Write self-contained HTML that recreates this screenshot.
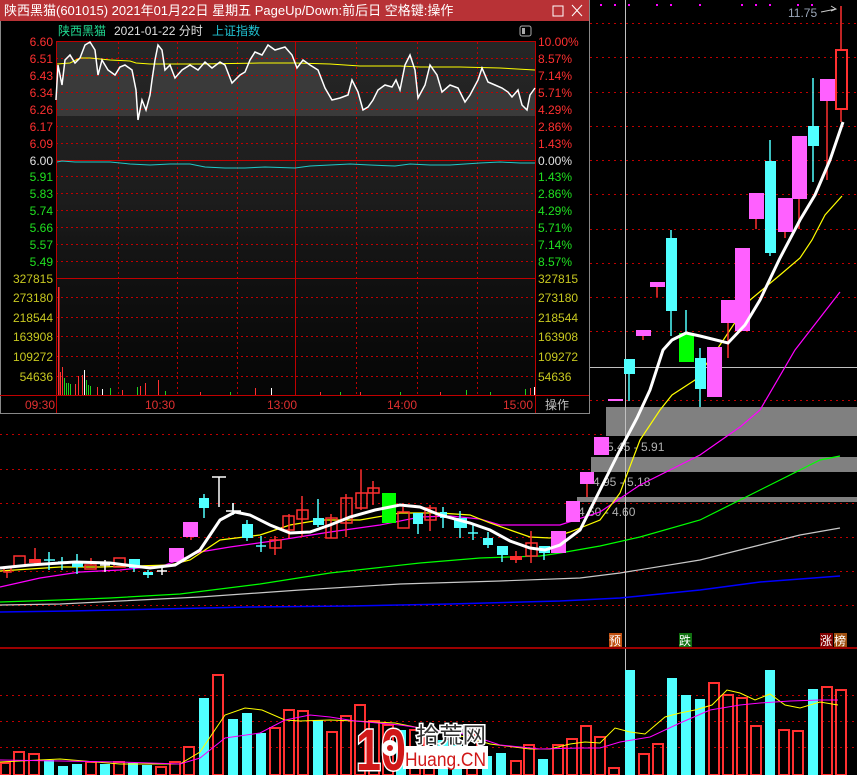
<!DOCTYPE html><html><head><meta charset="utf-8"><style>
html,body{margin:0;padding:0;background:#000;width:857px;height:775px;overflow:hidden}
svg{display:block}
text{font-family:"Liberation Sans","Noto Sans CJK SC",sans-serif}
</style></head><body>
<svg width="857" height="775" viewBox="0 0 857 775" xmlns="http://www.w3.org/2000/svg">
<rect width="857" height="775" fill="#000"/>
<g stroke="#c00000" stroke-width="1" stroke-dasharray="2,4">
<line x1="590" y1="23.5" x2="857" y2="23.5"/><line x1="590" y1="57.5" x2="857" y2="57.5"/><line x1="590" y1="92.5" x2="857" y2="92.5"/><line x1="590" y1="126.5" x2="857" y2="126.5"/><line x1="590" y1="160.5" x2="857" y2="160.5"/><line x1="590" y1="194.5" x2="857" y2="194.5"/><line x1="590" y1="229.5" x2="857" y2="229.5"/><line x1="590" y1="263.5" x2="857" y2="263.5"/><line x1="590" y1="297.5" x2="857" y2="297.5"/><line x1="590" y1="331.5" x2="857" y2="331.5"/><line x1="590" y1="400.5" x2="857" y2="400.5"/>
<line x1="0" y1="434.5" x2="857" y2="434.5"/><line x1="0" y1="469.5" x2="857" y2="469.5"/><line x1="0" y1="503.5" x2="857" y2="503.5"/><line x1="0" y1="537.5" x2="857" y2="537.5"/><line x1="0" y1="571.5" x2="857" y2="571.5"/><line x1="0" y1="605.5" x2="857" y2="605.5"/>
<line x1="0" y1="695.5" x2="857" y2="695.5"/><line x1="0" y1="721.5" x2="857" y2="721.5"/><line x1="0" y1="747.5" x2="857" y2="747.5"/>
</g>
<g fill="#ff00ff"><rect x="600" y="4" width="2" height="2"/><rect x="614" y="4" width="2" height="2"/><rect x="628" y="4" width="2" height="2"/><rect x="656" y="4" width="2" height="2"/><rect x="670" y="4" width="2" height="2"/><rect x="699" y="4" width="2" height="2"/><rect x="741" y="4" width="2" height="2"/><rect x="755" y="4" width="2" height="2"/><rect x="769" y="4" width="2" height="2"/><rect x="797" y="4" width="2" height="2"/><rect x="811" y="4" width="2" height="2"/></g>
<text x="788" y="17" font-size="12" fill="#9aa6b8">11.75</text>
<path d="M821 12 L836 9 M831 6 L836 9 L831 11" stroke="#ccc" fill="none" stroke-width="1"/>
<rect x="606" y="407" width="251" height="29" fill="#808080"/>
<rect x="591" y="457" width="266" height="15" fill="#808080"/>
<rect x="577" y="497" width="280" height="5" fill="#808080"/>
<g font-size="12" fill="#b0b0b0"><text x="607" y="451">5.45 - 5.91</text><text x="593" y="486">4.95 - 5.18</text><text x="578" y="516">4.50 - 4.60</text></g>
<line x1="625.5" y1="0" x2="625.5" y2="647" stroke="#c0c0c0"/>
<line x1="590" y1="367.5" x2="857" y2="367.5" stroke="#c0c0c0"/>
<line x1="625.5" y1="648" x2="625.5" y2="775" stroke="#c0c0c0"/>
<g fill="none">
<polyline stroke="#0000ff" stroke-width="1.5" points="0,612 70,611 160,609 250,607 350,606 450,604 560,601 620,598 700,590 760,582 840,576"/>
<polyline stroke="#c8c8c8" stroke-width="1.2" points="0,605 60,604 120,601 200,597 300,590 400,584 500,581 580,578 620,573 700,560 760,545 800,535 840,528"/>
<polyline stroke="#00ff00" stroke-width="1.2" points="0,602 60,600 110,598 180,594 260,584 330,573 420,563 480,558 540,556 560,553 600,546 640,537 700,520 740,500 780,480 820,460 840,456"/>
<polyline stroke="#ff00ff" stroke-width="1.2" points="0,587 40,578 80,572 120,570 165,565 200,552 230,547 280,540 330,532 380,525 420,517 450,516 480,519 500,525 520,525 560,525 600,512 640,485 700,455 740,427 760,410 795,350 840,292"/>
<polyline stroke="#ffff00" stroke-width="1.2" points="0,571 60,567 100,567 170,565 190,560 220,540 260,535 290,525 320,520 360,520 400,513 440,513 470,515 490,523 510,530 530,537 550,538 570,532 600,520 620,493 640,440 660,410 672,395 695,380 720,345 750,300 780,275 800,258 812,240 825,215 842,196"/>
</g>
<g stroke-width="1.5">
<g stroke="#ff3030" fill="none">
<rect x="4" y="567" width="7" height="5"/><line x1="7" y1="572" x2="7" y2="578"/>
<rect x="14" y="556" width="11" height="10"/>
<rect x="85" y="565" width="11" height="4"/><line x1="91" y1="558" x2="91" y2="565"/>
<rect x="114" y="558" width="11" height="9"/>
<rect x="270" y="540" width="11" height="8"/><line x1="275" y1="536" x2="275" y2="555"/>
<rect x="283" y="516" width="11" height="14"/><line x1="289" y1="514" x2="289" y2="538"/>
<rect x="297" y="510" width="11" height="9"/><line x1="302" y1="496" x2="302" y2="537"/>
<rect x="326" y="518" width="11" height="20"/><line x1="331" y1="514" x2="331" y2="538"/>
<rect x="341" y="498" width="11" height="25"/><line x1="346" y1="494" x2="346" y2="537"/>
<rect x="356" y="493" width="11" height="15"/><line x1="361" y1="470" x2="361" y2="510"/>
<rect x="368" y="488" width="11" height="5"/><line x1="373" y1="481" x2="373" y2="505"/>
<rect x="398" y="512" width="11" height="16"/><line x1="403" y1="507" x2="403" y2="512"/>
<rect x="425" y="508" width="11" height="12"/><line x1="430" y1="505" x2="430" y2="531"/>
<rect x="526" y="543" width="11" height="13"/><line x1="531" y1="531" x2="531" y2="563"/>
</g>
<g stroke="#ff3030"><line x1="35" y1="548" x2="35" y2="565"/><line x1="516" y1="551" x2="516" y2="563"/></g>
<rect x="29" y="559" width="12" height="4" fill="#ff3030"/><rect x="510" y="556" width="12" height="4" fill="#ff3030"/>
<g stroke="#50ffff">
<line x1="49" y1="552" x2="49" y2="570"/><line x1="44" y1="560" x2="55" y2="560"/>
<line x1="62" y1="557" x2="62" y2="570"/><line x1="58" y1="562" x2="66" y2="562"/>
<line x1="77" y1="554" x2="77" y2="574"/>
<line x1="134" y1="559" x2="134" y2="572"/><line x1="148" y1="570" x2="148" y2="578"/>
<line x1="204" y1="494" x2="204" y2="518"/><line x1="233" y1="503" x2="233" y2="515"/><line x1="247" y1="520" x2="247" y2="541"/>
<line x1="261" y1="536" x2="261" y2="552"/><line x1="256" y1="546" x2="266" y2="546"/>
<line x1="318" y1="499" x2="318" y2="527"/><line x1="418" y1="513" x2="418" y2="534"/>
<line x1="443" y1="507" x2="443" y2="528"/><line x1="460" y1="511" x2="460" y2="538"/>
<line x1="473" y1="525" x2="473" y2="540"/><line x1="468" y1="533" x2="478" y2="533"/>
<line x1="488" y1="532" x2="488" y2="548"/><line x1="502" y1="546" x2="502" y2="562"/><line x1="544" y1="546" x2="544" y2="560"/>
</g>
<g fill="#50ffff"><rect x="72" y="563" width="11" height="4"/><rect x="129" y="559" width="11" height="9"/><rect x="143" y="572" width="10" height="3"/><rect x="199" y="498" width="10" height="10"/><rect x="242" y="524" width="11" height="14"/><rect x="313" y="518" width="11" height="7"/><rect x="413" y="513" width="10" height="11"/><rect x="440" y="512" width="7" height="6"/><rect x="454" y="518" width="13" height="10"/><rect x="483" y="538" width="10" height="7"/><rect x="497" y="546" width="11" height="9"/><rect x="539" y="546" width="11" height="7"/></g>
<g stroke="#fff"><line x1="105" y1="560" x2="105" y2="572"/><line x1="100" y1="565" x2="110" y2="565"/><line x1="162" y1="568" x2="162" y2="575"/><line x1="157" y1="571" x2="167" y2="571"/><line x1="219" y1="477" x2="219" y2="507"/><line x1="212" y1="477" x2="226" y2="477"/><line x1="233" y1="503" x2="233" y2="511"/><line x1="226" y1="511" x2="241" y2="511"/></g>
<g stroke="#ff3030"><line x1="191" y1="537" x2="191" y2="540"/><line x1="587" y1="484" x2="587" y2="497"/></g>
<g fill="#ff60ff"><rect x="169" y="548" width="15" height="14"/><rect x="183" y="522" width="15" height="15"/><rect x="551" y="531" width="15" height="22"/><rect x="566" y="501" width="14" height="21"/><rect x="580" y="472" width="14" height="12"/><rect x="594" y="437" width="15" height="18"/></g>
<rect x="382" y="493" width="14" height="30" fill="#00ff00"/>
</g>
<g stroke-width="1.5">
<rect x="608" y="399" width="15" height="2" fill="#ff60ff"/>
<line x1="629" y1="359" x2="629" y2="401" stroke="#50ffff"/><rect x="624" y="359" width="11" height="15" fill="#50ffff"/>
<line x1="643" y1="330" x2="643" y2="340" stroke="#ff3030"/><rect x="636" y="330" width="15" height="6" fill="#ff60ff"/>
<line x1="657" y1="282" x2="657" y2="297" stroke="#ff3030"/><rect x="650" y="282" width="15" height="5" fill="#ff60ff"/>
<line x1="671" y1="230" x2="671" y2="336" stroke="#50ffff"/><rect x="666" y="238" width="11" height="73" fill="#50ffff"/>
<line x1="686" y1="310" x2="686" y2="333" stroke="#50ffff"/><rect x="679" y="333" width="15" height="29" fill="#00ff00"/>
<line x1="700" y1="348" x2="700" y2="407" stroke="#50ffff"/><rect x="695" y="358" width="11" height="31" fill="#50ffff"/>
<rect x="707" y="347" width="15" height="50" fill="#ff60ff"/>
<line x1="728" y1="300" x2="728" y2="358" stroke="#ff3030"/><rect x="721" y="300" width="16" height="23" fill="#ff60ff"/>
<rect x="735" y="248" width="15" height="83" fill="#ff60ff"/>
<line x1="756" y1="193" x2="756" y2="229" stroke="#ff3030"/><rect x="749" y="193" width="15" height="26" fill="#ff60ff"/>
<line x1="770" y1="140" x2="770" y2="256" stroke="#50ffff"/><rect x="765" y="161" width="11" height="92" fill="#50ffff"/>
<line x1="785" y1="198" x2="785" y2="238" stroke="#ff3030"/><rect x="778" y="198" width="15" height="34" fill="#ff60ff"/>
<line x1="799" y1="136" x2="799" y2="229" stroke="#ff3030"/><rect x="792" y="136" width="15" height="63" fill="#ff60ff"/>
<line x1="813" y1="78" x2="813" y2="182" stroke="#50ffff"/><rect x="808" y="126" width="11" height="20" fill="#50ffff"/>
<line x1="827" y1="79" x2="827" y2="180" stroke="#ff3030"/><rect x="820" y="79" width="15" height="22" fill="#ff60ff"/>
<line x1="841" y1="6" x2="841" y2="50" stroke="#ff3030"/><line x1="841" y1="109" x2="841" y2="122" stroke="#ff3030"/><rect x="836" y="50" width="11" height="59" fill="none" stroke="#ff3030" stroke-width="2"/>
</g>
<polyline fill="none" stroke="#fff" stroke-width="3" points="0,568 30,565 75,562 110,563 150,568 175,565 200,550 220,520 235,512 250,515 270,525 290,533 310,532 330,525 350,517 375,510 400,505 420,507 440,515 470,523 490,530 510,541 530,548 545,550 560,545 580,530 600,490 620,450 637,418 650,390 663,350 672,340 686,333 700,336 728,343 745,325 760,300 780,258 800,220 815,195 830,160 843,122"/>
<line x1="0" y1="648" x2="857" y2="648" stroke="#d00000" stroke-width="1.5"/>
<g font-size="12"><rect x="609" y="633" width="13" height="14" fill="#c05010"/><text x="609" y="645" fill="#fff">预</text>
<rect x="679" y="633" width="13" height="14" fill="#107010"/><text x="679" y="645" fill="#fff">跌</text>
<rect x="820" y="633" width="13" height="14" fill="#800000"/><text x="820" y="645" fill="#fff">涨</text>
<rect x="834" y="633" width="13" height="14" fill="#a05010"/><text x="834" y="645" fill="#fff">榜</text></g>
<g fill="none" stroke="#ff3030" stroke-width="2">
<rect x="1" y="763" width="9" height="12"/><rect x="14" y="752" width="10" height="23"/><rect x="29" y="754" width="10" height="21"/><rect x="86" y="762" width="10" height="13"/><rect x="114" y="762" width="10" height="13"/><rect x="156" y="767" width="10" height="8"/><rect x="170" y="762" width="10" height="13"/><rect x="184" y="747" width="10" height="28"/><rect x="213" y="675" width="10" height="100"/><rect x="270" y="728" width="10" height="47"/><rect x="284" y="710" width="10" height="65"/><rect x="298" y="711" width="10" height="64"/><rect x="327" y="732" width="10" height="43"/><rect x="341" y="716" width="10" height="59"/><rect x="355" y="705" width="10" height="70"/><rect x="369" y="721" width="10" height="54"/><rect x="383" y="725" width="10" height="50"/><rect x="410" y="730" width="10" height="45"/><rect x="424" y="735" width="10" height="40"/><rect x="467" y="735" width="10" height="40"/><rect x="511" y="761" width="10" height="14"/><rect x="524" y="745" width="10" height="30"/><rect x="553" y="745" width="10" height="30"/><rect x="567" y="739" width="10" height="36"/><rect x="581" y="726" width="10" height="49"/><rect x="595" y="737" width="10" height="38"/><rect x="609" y="768" width="10" height="7"/><rect x="639" y="754" width="10" height="21"/><rect x="653" y="744" width="10" height="31"/><rect x="709" y="683" width="10" height="92"/><rect x="723" y="695" width="10" height="80"/><rect x="737" y="698" width="10" height="77"/><rect x="751" y="726" width="10" height="49"/><rect x="779" y="730" width="10" height="45"/><rect x="793" y="731" width="10" height="44"/><rect x="822" y="687" width="10" height="88"/><rect x="836" y="690" width="10" height="85"/>
</g>
<g fill="#50ffff">
<rect x="44" y="760" width="10" height="15"/><rect x="58" y="766" width="10" height="9"/><rect x="72" y="764" width="10" height="11"/><rect x="100" y="764" width="10" height="11"/><rect x="128" y="763" width="10" height="12"/><rect x="142" y="765" width="10" height="10"/><rect x="199" y="698" width="10" height="77"/><rect x="228" y="719" width="10" height="56"/><rect x="242" y="713" width="10" height="62"/><rect x="256" y="733" width="10" height="42"/><rect x="313" y="720" width="10" height="55"/><rect x="396" y="730" width="10" height="45"/><rect x="438" y="740" width="10" height="35"/><rect x="452" y="745" width="10" height="30"/><rect x="482" y="756" width="10" height="19"/><rect x="496" y="753" width="10" height="22"/><rect x="538" y="759" width="10" height="16"/><rect x="625" y="670" width="10" height="105"/><rect x="667" y="678" width="10" height="97"/><rect x="681" y="695" width="10" height="80"/><rect x="695" y="699" width="10" height="76"/><rect x="765" y="670" width="10" height="105"/><rect x="808" y="689" width="10" height="86"/>
</g>
<polyline fill="none" stroke="#ffff00" stroke-width="1" points="0,762 60,759 120,764 180,764 200,752 225,715 245,708 262,710 285,720 300,721 330,720 355,721 395,723 430,730 470,738 490,744 530,749 550,749 570,744 585,742 600,743 615,728 630,732 645,734 665,717 680,713 695,710 712,705 727,690 740,693 755,700 770,694 785,705 800,708 820,702 838,705"/>
<polyline fill="none" stroke="#ff00ff" stroke-width="1" points="0,760 60,761 120,762 180,764 200,758 225,738 260,733 285,720 310,715 330,717 355,721 400,725 470,735 500,745 540,749 580,748 600,748 620,742 650,737 680,723 710,710 740,705 760,703 790,701 820,700 838,700"/>
<!-- watermark -->
<rect x="403" y="746" width="85" height="23" fill="#fff"/>
<text x="405" y="766" font-size="19" fill="#d01818" textLength="81" lengthAdjust="spacingAndGlyphs">Huang.CN</text>
<text x="416" y="743" font-size="22" fill="#333" stroke="#fff" stroke-width="3" paint-order="stroke" textLength="70" lengthAdjust="spacingAndGlyphs">拾荒网</text>
<text x="356" y="770" font-size="58" font-weight="bold" fill="#d01818" stroke="#fff" stroke-width="3" paint-order="stroke" textLength="50" lengthAdjust="spacingAndGlyphs">10</text>
<circle cx="390" cy="748" r="8" fill="#fff"/><circle cx="390" cy="748" r="3" fill="#d01818"/>
<!-- POPUP -->
<rect x="0" y="0" width="590" height="414" fill="#000"/>
<rect x="0" y="0" width="589" height="21" fill="#b83236"/>
<text x="4" y="15" font-size="13" fill="#fff">陕西黑猫(601015) 2021年01月22日 星期五 PageUp/Down:前后日 空格键:操作</text>
<rect x="553" y="6" width="10" height="10" fill="none" stroke="#fff"/>
<path d="M572 5 L582 16 M582 5 L572 16" stroke="#fff" stroke-width="1"/>
<line x1="589.5" y1="0" x2="589.5" y2="414" stroke="#888"/>
<line x1="0" y1="413.5" x2="590" y2="413.5" stroke="#888"/>
<line x1="0.5" y1="21" x2="0.5" y2="414" stroke="#888"/>
<text x="58" y="35" font-size="12" fill="#20d890">陕西黑猫</text>
<text x="114" y="35" font-size="12" fill="#e0e0e0">2021-01-22 分时</text>
<text x="212" y="35" font-size="12" fill="#20c0d0">上证指数</text>
<rect x="520" y="26" width="11" height="10" rx="2" fill="none" stroke="#aaa"/><rect x="522" y="28" width="3" height="6" fill="#aaa"/>
<defs><linearGradient id="bg" x1="0" y1="0" x2="0" y2="1">
<stop offset="0" stop-color="#262626"/><stop offset="0.45" stop-color="#1c1c1c"/><stop offset="0.6" stop-color="#141414"/><stop offset="1" stop-color="#050505"/></linearGradient></defs>
<rect x="56" y="42" width="479" height="353" fill="url(#bg)"/>
<polygon fill="#3a3a3a" points="56,116 56,100 58,65 62,85 65,60 70,55 75,63 80,58 85,45 90,42 95,50 98,75 102,60 108,70 115,75 120,67 125,65 132,70 136,90 138,116 142,100 146,110 150,95 152,80 155,60 158,45 162,50 165,70 170,65 175,78 182,70 190,65 198,70 205,62 212,68 220,62 225,65 232,83 240,75 245,72 250,60 255,52 262,55 268,45 275,50 285,47 292,55 297,68 303,60 310,65 318,70 325,88 332,100 340,98 348,95 352,80 358,92 363,110 368,107 373,100 378,90 385,85 392,87 396,80 400,90 405,65 410,55 415,70 418,98 425,85 430,65 437,75 442,92 450,85 458,88 465,102 470,95 478,80 482,68 488,82 495,85 502,88 508,92 512,97 518,90 522,105 527,110 530,95 535,88 535,116"/>
<g stroke="#c00000" stroke-dasharray="2,3">
<line x1="56" y1="58.5" x2="535" y2="58.5"/><line x1="56" y1="75.5" x2="535" y2="75.5"/><line x1="56" y1="92.5" x2="535" y2="92.5"/><line x1="56" y1="109.5" x2="535" y2="109.5"/><line x1="56" y1="126.5" x2="535" y2="126.5"/><line x1="56" y1="143.5" x2="535" y2="143.5"/><line x1="56" y1="176.5" x2="535" y2="176.5"/><line x1="56" y1="193.5" x2="535" y2="193.5"/><line x1="56" y1="210.5" x2="535" y2="210.5"/><line x1="56" y1="227.5" x2="535" y2="227.5"/><line x1="56" y1="244.5" x2="535" y2="244.5"/><line x1="56" y1="261.5" x2="535" y2="261.5"/><line x1="56" y1="297.5" x2="535" y2="297.5"/><line x1="56" y1="317.5" x2="535" y2="317.5"/><line x1="56" y1="336.5" x2="535" y2="336.5"/><line x1="56" y1="356.5" x2="535" y2="356.5"/><line x1="56" y1="376.5" x2="535" y2="376.5"/>
<line x1="118.5" y1="42" x2="118.5" y2="395"/><line x1="177.5" y1="42" x2="177.5" y2="395"/><line x1="237.5" y1="42" x2="237.5" y2="395"/><line x1="356.5" y1="42" x2="356.5" y2="395"/><line x1="417.5" y1="42" x2="417.5" y2="395"/><line x1="477.5" y1="42" x2="477.5" y2="395"/>
</g>
<g stroke="#c00000" fill="none">
<line x1="56" y1="41.5" x2="535" y2="41.5"/><line x1="56" y1="160.5" x2="535" y2="160.5"/><line x1="56" y1="278.5" x2="535" y2="278.5"/>
<line x1="0" y1="395.5" x2="589" y2="395.5"/>
<line x1="56.5" y1="41" x2="56.5" y2="413"/><line x1="535.5" y1="41" x2="535.5" y2="413"/><line x1="295.5" y1="41" x2="295.5" y2="395"/>
</g>
<polyline fill="none" stroke="#ffff00" stroke-width="1" points="57,64 70,63 80,58 90,58 110,60 130,61 136,63 150,64 200,64 260,63 295,63 330,64 360,66 400,66 420,67 460,67 500,68 535,70"/>
<polyline fill="none" stroke="#20c8c8" stroke-width="1" points="57,162 62,161 75,162 90,162 110,162 130,164 150,165 170,164 190,164 205,167 225,168 245,168 265,167 295,168 310,166 330,165 350,164 370,165 395,166 410,164 430,165 450,165 480,163 500,162 520,163 535,163"/>
<polyline fill="none" stroke="#fff" stroke-width="1.5" points="56,100 58,65 62,85 65,60 70,55 75,63 80,58 85,45 90,42 95,50 98,75 102,60 108,70 115,75 120,67 125,65 132,70 136,90 138,120 142,100 146,110 150,95 152,80 155,60 158,45 162,50 165,70 170,65 175,78 182,70 190,65 198,70 205,62 212,68 220,62 225,65 232,83 240,75 245,72 250,60 255,52 262,55 268,45 275,50 285,47 292,55 297,68 303,60 310,65 318,70 325,88 332,100 340,98 348,95 352,80 358,92 363,110 368,107 373,100 378,90 385,85 392,87 396,80 400,90 405,65 410,55 415,70 418,98 425,85 430,65 437,75 442,92 450,85 458,88 465,102 470,95 478,80 482,68 488,82 495,85 502,88 508,92 512,97 518,90 522,105 527,110 530,95 535,88"/>
<rect x="58" y="287" width="1.5" height="108" fill="#ff3030"/>
<g fill="#ff3030"><rect x="60" y="372" width="1" height="23"/><rect x="62" y="367" width="1" height="28"/><rect x="75" y="384" width="1" height="11"/><rect x="78" y="376" width="1" height="19"/><rect x="82" y="375" width="1" height="20"/><rect x="97" y="387" width="1" height="8"/><rect x="122" y="390" width="1" height="5"/><rect x="140" y="386" width="1" height="9"/><rect x="145" y="383" width="1" height="12"/><rect x="158" y="380" width="1" height="15"/><rect x="255" y="388" width="1" height="7"/><rect x="530" y="388" width="1" height="7"/><rect x="200" y="392" width="1" height="3"/><rect x="320" y="392" width="1" height="3"/><rect x="360" y="392" width="1" height="3"/><rect x="440" y="392" width="1" height="3"/></g>
<g fill="#20d020"><rect x="64" y="378" width="1" height="17"/><rect x="66" y="383" width="1" height="12"/><rect x="68" y="383" width="1" height="12"/><rect x="70" y="384" width="1" height="11"/><rect x="86" y="380" width="1" height="15"/><rect x="88" y="385" width="1" height="10"/><rect x="90" y="386" width="1" height="9"/><rect x="110" y="388" width="1" height="7"/><rect x="137" y="387" width="1" height="8"/><rect x="165" y="391" width="1" height="4"/><rect x="466" y="390" width="1" height="5"/><rect x="525" y="389" width="1" height="6"/><rect x="230" y="392" width="1" height="3"/><rect x="340" y="392" width="1" height="3"/><rect x="400" y="392" width="1" height="3"/><rect x="490" y="392" width="1" height="3"/></g>
<g fill="#fff"><rect x="84" y="370" width="1" height="25"/><rect x="102" y="389" width="1" height="6"/><rect x="271" y="388" width="1" height="7"/><rect x="534" y="387" width="1" height="8"/></g>
<g font-size="12" text-anchor="end">
<text x="53" y="46" fill="#ff3030">6.60</text><text x="53" y="63" fill="#ff3030">6.51</text><text x="53" y="80" fill="#ff3030">6.43</text><text x="53" y="97" fill="#ff3030">6.34</text><text x="53" y="114" fill="#ff3030">6.26</text><text x="53" y="131" fill="#ff3030">6.17</text><text x="53" y="148" fill="#ff3030">6.09</text>
<text x="53" y="165" fill="#e0e0e0">6.00</text>
<text x="53" y="181" fill="#20e020">5.91</text><text x="53" y="198" fill="#20e020">5.83</text><text x="53" y="215" fill="#20e020">5.74</text><text x="53" y="232" fill="#20e020">5.66</text><text x="53" y="249" fill="#20e020">5.57</text><text x="53" y="266" fill="#20e020">5.49</text>
<text x="53" y="283" fill="#c8c820">327815</text><text x="53" y="302" fill="#c8c820">273180</text><text x="53" y="322" fill="#c8c820">218544</text><text x="53" y="341" fill="#c8c820">163908</text><text x="53" y="361" fill="#c8c820">109272</text><text x="53" y="381" fill="#c8c820">54636</text>
</g>
<g font-size="12">
<text x="538" y="46" fill="#ff3030">10.00%</text><text x="538" y="63" fill="#ff3030">8.57%</text><text x="538" y="80" fill="#ff3030">7.14%</text><text x="538" y="97" fill="#ff3030">5.71%</text><text x="538" y="114" fill="#ff3030">4.29%</text><text x="538" y="131" fill="#ff3030">2.86%</text><text x="538" y="148" fill="#ff3030">1.43%</text>
<text x="538" y="165" fill="#e0e0e0">0.00%</text>
<text x="538" y="181" fill="#20e020">1.43%</text><text x="538" y="198" fill="#20e020">2.86%</text><text x="538" y="215" fill="#20e020">4.29%</text><text x="538" y="232" fill="#20e020">5.71%</text><text x="538" y="249" fill="#20e020">7.14%</text><text x="538" y="266" fill="#20e020">8.57%</text>
<text x="538" y="283" fill="#c8c820">327815</text><text x="538" y="302" fill="#c8c820">273180</text><text x="538" y="322" fill="#c8c820">218544</text><text x="538" y="341" fill="#c8c820">163908</text><text x="538" y="361" fill="#c8c820">109272</text><text x="538" y="381" fill="#c8c820">54636</text>
<text x="25" y="409" fill="#e03030">09:30</text><text x="145" y="409" fill="#e03030">10:30</text><text x="267" y="409" fill="#e03030">13:00</text><text x="387" y="409" fill="#e03030">14:00</text><text x="503" y="409" fill="#e03030">15:00</text>
<text x="545" y="409" fill="#c0c0c0">操作</text>
</g>
</svg>
</body></html>
